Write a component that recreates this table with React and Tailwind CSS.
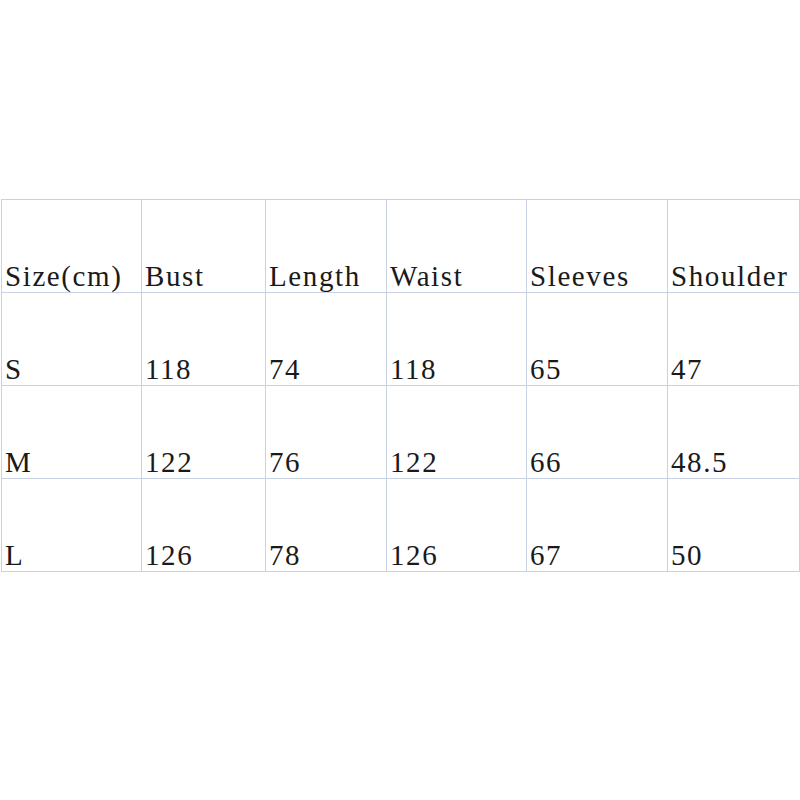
import React from 'react';

const headers = ['Size(cm)', 'Bust', 'Length', 'Waist', 'Sleeves', 'Shoulder'];

const rows = [
  ['S', '118', '74', '118', '65', '47'],
  ['M', '122', '76', '122', '66', '48.5'],
  ['L', '126', '78', '126', '67', '50'],
];

const Cell = ({ children }) => (
  <div className="h-[93px] border-r border-b border-[#c9d2e2] flex items-end pl-[3px] pb-px">
    <span className="text-[29px] leading-[30px] tracking-[1.6px] text-[#1a1a1a] whitespace-nowrap">{children}</span>
  </div>
);

const App = () => {
  return (
    <div
      className="bg-white w-[800px] h-[800px] pt-[199px] pl-px"
      style={{ fontFamily: '"Liberation Serif", "Noto Sans CJK SC", serif' }}
    >
      <div className="grid grid-cols-[140px_124px_121px_140px_141px_132px] border-l border-t border-[#c9d2e2] w-[799px]">
        {headers.map((h) => (
          <Cell key={h}>{h}</Cell>
        ))}
        {rows.map((row, i) =>
          row.map((val, j) => <Cell key={`${i}-${j}`}>{val}</Cell>)
        )}
      </div>
    </div>
  );
};

export default App;
